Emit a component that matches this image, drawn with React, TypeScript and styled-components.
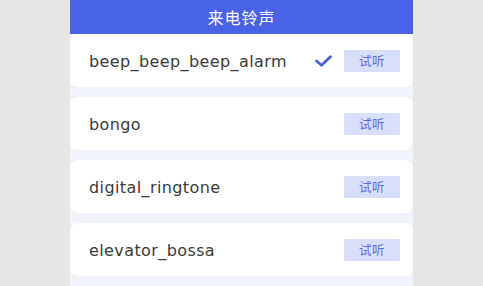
import { createGlobalStyle } from "styled-components";
import styled from "styled-components";

const GlobalStyle = createGlobalStyle`
  html, body {
    margin: 0;
    padding: 0;
    background: #e6e6e6;
  }
`;

const Page = styled.div`
  min-height: 286px;
  background: #e6e6e6;
  display: flex;
  justify-content: center;
`;

const Panel = styled.div`
  width: 343px;
  background: #f0f3fa;
  min-height: 286px;
`;

const Header = styled.div`
  height: 34px;
  background: #4a62e6;
  color: #ffffff;
  display: flex;
  align-items: center;
  justify-content: center;
  font-family: "Noto Sans CJK SC", sans-serif;
  font-size: 16px;
  letter-spacing: 1px;
`;

const List = styled.div`
  display: flex;
  flex-direction: column;
  gap: 10px;
`;

const Row = styled.div`
  height: 53px;
  background: #ffffff;
  border-radius: 8px;
  display: flex;
  align-items: center;
  padding: 2px 13px 0 19px;
  box-sizing: border-box;
`;

const Name = styled.div`
  flex: 1;
  font-family: "DejaVu Sans", sans-serif;
  font-size: 16px;
  letter-spacing: 0.4px;
  color: #3a3a3a;
`;

const Check = styled.svg`
  width: 17px;
  height: 12px;
  margin-right: 12px;
  margin-top: -2px;
`;

const ListenButton = styled.button`
  width: 56px;
  height: 22px;
  border: none;
  border-radius: 1px;
  background: #d9defb;
  color: #5a6ee0;
  font-family: "Noto Sans CJK SC", sans-serif;
  font-size: 12.5px;
  letter-spacing: 0.5px;
  padding: 0;
  margin-top: -2px;
`;

const tones = [
  { name: "beep_beep_beep_alarm", selected: true },
  { name: "bongo", selected: false },
  { name: "digital_ringtone", selected: false },
  { name: "elevator_bossa", selected: false },
];

export default function App() {
  return (
    <>
      <GlobalStyle />
      <Page>
        <Panel>
          <Header>来电铃声</Header>
          <List>
            {tones.map((t) => (
              <Row key={t.name}>
                <Name>{t.name}</Name>
                {t.selected && (
                  <Check viewBox="0 0 17 12">
                    <path
                      d="M1.5 6 L6.5 10.2 L15.5 1.8"
                      fill="none"
                      stroke="#4a64d8"
                      strokeWidth="2.8"
                      strokeLinecap="round"
                      strokeLinejoin="round"
                    />
                  </Check>
                )}
                <ListenButton>试听</ListenButton>
              </Row>
            ))}
          </List>
        </Panel>
      </Page>
    </>
  );
}
